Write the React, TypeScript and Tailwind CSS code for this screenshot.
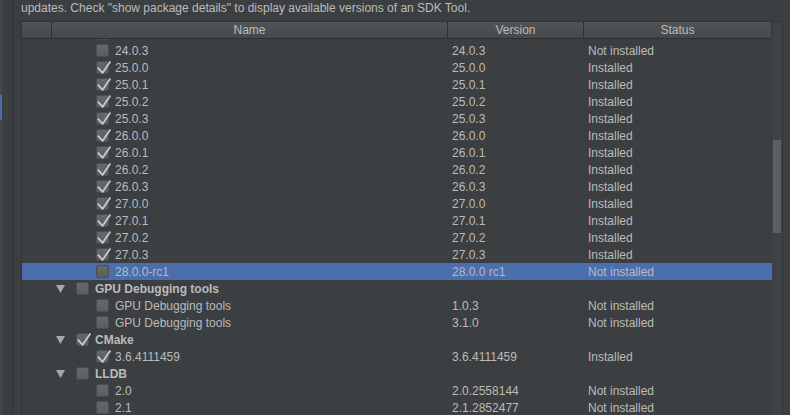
import React from 'react';

type Row = {
  kind: 'item' | 'section';
  name: string;
  version?: string;
  status?: string;
  checked?: boolean;
  selected?: boolean;
};

const ROWS: Row[] = [
  { kind: 'item', name: '24.0.3', version: '24.0.3', status: 'Not installed' },
  ...['25.0.0', '25.0.1', '25.0.2', '25.0.3', '26.0.0', '26.0.1', '26.0.2', '26.0.3', '27.0.0', '27.0.1', '27.0.2', '27.0.3'].map(
    (v): Row => ({ kind: 'item', name: v, version: v, status: 'Installed', checked: true })
  ),
  { kind: 'item', name: '28.0.0-rc1', version: '28.0.0 rc1', status: 'Not installed', selected: true },
  { kind: 'section', name: 'GPU Debugging tools' },
  { kind: 'item', name: 'GPU Debugging tools', version: '1.0.3', status: 'Not installed' },
  { kind: 'item', name: 'GPU Debugging tools', version: '3.1.0', status: 'Not installed' },
  { kind: 'section', name: 'CMake', checked: true },
  { kind: 'item', name: '3.6.4111459', version: '3.6.4111459', status: 'Installed', checked: true },
  { kind: 'section', name: 'LLDB' },
  { kind: 'item', name: '2.0', version: '2.0.2558144', status: 'Not installed' },
  { kind: 'item', name: '2.1', version: '2.1.2852477', status: 'Not installed' },
];

function CheckBox({ checked }: { checked?: boolean }) {
  return (
    <span className="relative block w-[13px] h-[13px] shrink-0 rounded-[2px] border border-[#4b4d4f] bg-gradient-to-b from-[#66696b] to-[#5b5e60]">
      {checked && (
        <svg className="absolute left-[-1px] top-[-2px] overflow-visible" width="15" height="15" viewBox="0 0 15 15">
          <path d="M1.8 7.6 L6.6 12.8 L14.4 1.4" fill="none" stroke="#c9c9c9" strokeWidth="1.8" />
        </svg>
      )}
    </span>
  );
}

function Triangle() {
  return (
    <svg width="9" height="8" viewBox="0 0 9 8" className="shrink-0">
      <polygon points="0,0 9,0 4.5,8" fill="#a8a8a8" />
    </svg>
  );
}

function TableRow({ row }: { row: Row }) {
  return (
    <div className={`flex items-center h-[17px] ${row.selected ? 'bg-[#4b6eaf]' : ''}`}>
      <div className="w-[426px] flex items-center shrink-0">
        {row.kind === 'section' ? (
          <>
            <span className="w-[34px] shrink-0" />
            <Triangle />
            <span className="w-[11px] shrink-0" />
            <CheckBox checked={row.checked} />
            <span className="ml-[6px] font-bold">{row.name}</span>
          </>
        ) : (
          <>
            <span className="w-[74px] shrink-0" />
            <CheckBox checked={row.checked} />
            <span className="ml-[6px]">{row.name}</span>
          </>
        )}
      </div>
      <div className="w-[136px] shrink-0 pl-[4px]">{row.version}</div>
      <div className="flex-1 pl-[4px]">{row.status}</div>
    </div>
  );
}

export default function App() {
  return (
    <div
      className="w-[790px] h-[415px] bg-[#3c3f41] text-[#bbbbbb] text-[12px] flex overflow-hidden"
      style={{ fontFamily: '"Liberation Sans", Arial, sans-serif' }}
    >
      {/* left tool strip */}
      <div className="w-[2px] h-full bg-[#45484a] shrink-0 flex flex-col">
        <div className="h-[95px]" />
        <div className="h-[25px] bg-[#4a6da7]" />
      </div>
      <div className="w-[10px] h-full shrink-0" />
      <div className="w-[1px] h-full bg-[#2f3133] shrink-0" />
      <div className="w-[8px] h-full shrink-0" />

      {/* main */}
      <div className="flex flex-col shrink-0">
        <div className="h-[21px] leading-[17px] whitespace-nowrap">
          updates. Check "show package details" to display available versions of an SDK Tool.
        </div>

        <div className="w-[762px] flex-1 flex border-l border-t border-r border-[#323436] overflow-hidden">
          <div className="w-[750px] flex flex-col shrink-0">
            {/* header */}
            <div className="h-[17px] flex shrink-0 bg-gradient-to-b from-[#515456] to-[#46494b] border-b border-[#2e3032] border-r border-r-[#35373a]">
              <div className="w-[30px] border-r border-[#2e3032]" />
              <div className="w-[396px] border-r border-[#2e3032] flex items-center justify-center">
                <span className="leading-[14px]">Name</span>
              </div>
              <div className="w-[136px] border-r border-[#2e3032] flex items-center justify-center">
                <span className="leading-[14px]">Version</span>
              </div>
              <div className="flex-1 flex items-center justify-center">
                <span className="leading-[14px]">Status</span>
              </div>
            </div>
            {/* rows, scrolled: the row above 24.0.3 only shows its checkbox edge */}
            <div className="flex-1 overflow-hidden">
              <div className="mt-[-14px]">
                <div className="flex items-center h-[17px] pl-[74px]">
                  <CheckBox />
                </div>
                {ROWS.map((r, i) => (
                  <TableRow key={i} row={r} />
                ))}
              </div>
            </div>
          </div>

          {/* scrollbar */}
          <div className="w-[10px] shrink-0 bg-[#3f4244] pt-[118px]">
            <div className="ml-[1px] w-[8px] h-[93px] bg-[#5b6062]" />
          </div>
        </div>
      </div>
    </div>
  );
}
